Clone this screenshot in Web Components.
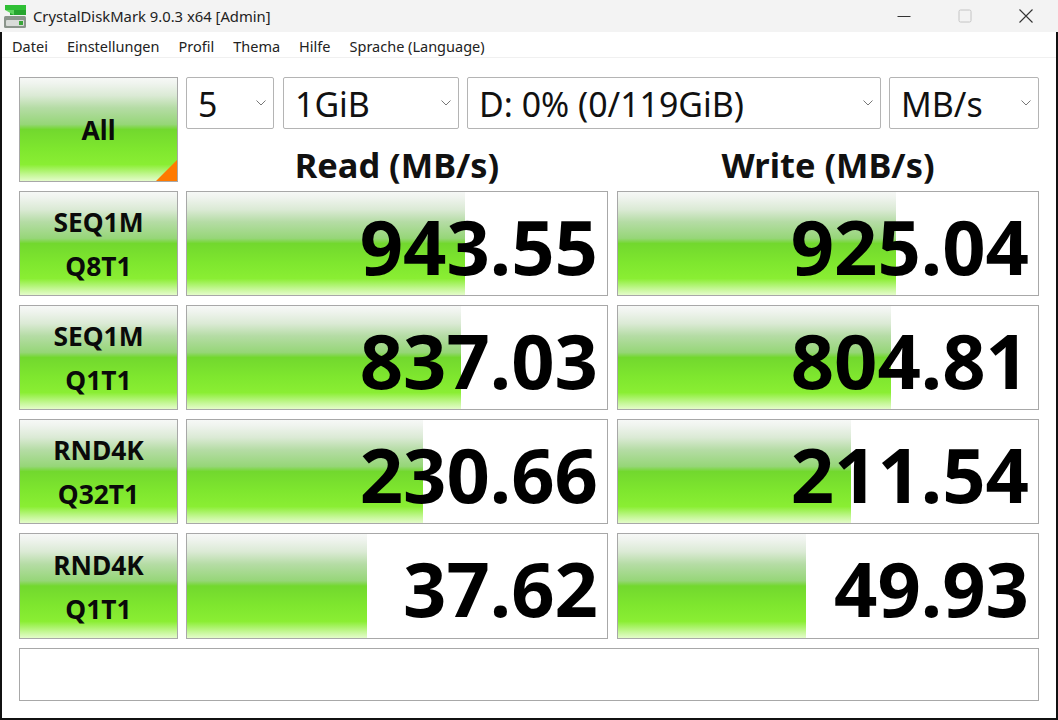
<!DOCTYPE html>
<html lang="de"><head><meta charset="utf-8"><title>CrystalDiskMark</title>
<style>
html,body{margin:0;padding:0;background:#fff}
body{width:1058px;height:720px;overflow:hidden;font-family:"Noto Sans","Open Sans",sans-serif}
</style></head><body>
<cdm-window>
  <cdm-titlebar slot="title">CrystalDiskMark 9.0.3 x64 [Admin]</cdm-titlebar>
  <cdm-menubar slot="menu" items="Datei|Einstellungen|Profil|Thema|Hilfe|Sprache (Language)"></cdm-menubar>
  <cdm-grid>
    <cdm-button class="all" corner>All</cdm-button>
    <cdm-toolbar>
      <cdm-select style="width:88px;margin-right:1px">5</cdm-select>
      <cdm-select style="width:176px">1GiB</cdm-select>
      <cdm-select style="width:414px">D: 0% (0/119GiB)</cdm-select>
      <cdm-select style="width:150px">MB/s</cdm-select>
    </cdm-toolbar>
    <cdm-heading>Read (MB/s)</cdm-heading>
    <cdm-heading class="w">Write (MB/s)</cdm-heading>

    <cdm-button>SEQ1M<br>Q8T1</cdm-button>
    <cdm-meter bar="278">943.55</cdm-meter>
    <cdm-meter class="w" bar="278">925.04</cdm-meter>

    <cdm-button>SEQ1M<br>Q1T1</cdm-button>
    <cdm-meter bar="274">837.03</cdm-meter>
    <cdm-meter class="w" bar="273">804.81</cdm-meter>

    <cdm-button>RND4K<br>Q32T1</cdm-button>
    <cdm-meter bar="236">230.66</cdm-meter>
    <cdm-meter class="w" bar="233">211.54</cdm-meter>

    <cdm-button>RND4K<br>Q1T1</cdm-button>
    <cdm-meter bar="180">37.62</cdm-meter>
    <cdm-meter class="w" bar="188">49.93</cdm-meter>

    <cdm-comment></cdm-comment>
  </cdm-grid>
</cdm-window>
<script>
const GRAD='linear-gradient(180deg,#f6f8f6 0%,#f0f4ef 5%,#dbead5 17%,#b5dca5 29%,#96d678 45%,#72d82e 50%,#7ee62e 68%,#8aee33 84%,#c4f795 94%,#e4fcca 100%)';
function def(name,html,init){
  customElements.define(name,class extends HTMLElement{
    constructor(){super();const r=this.attachShadow({mode:'open'});r.innerHTML=html;}
    connectedCallback(){init&&init(this,this.shadowRoot);}
  });
}
def('cdm-window',`<style>
:host{display:flex;flex-direction:column;width:1058px;height:720px;box-sizing:border-box;background:#fff}
.body{flex:1;display:flex;flex-direction:column;border:solid #111;border-width:0 2px 2px 2px;min-height:0}
</style><slot name="title"></slot><div class="body"><slot name="menu"></slot><slot></slot></div>`);
def('cdm-titlebar',`<style>
:host{display:flex;align-items:center;height:32px;background:#f3f3f3;color:#222;font:14.8px "Noto Sans",sans-serif;flex:none}
.ic{margin:0 7px 0 4px;flex:none;display:block}
.t{flex:1;white-space:nowrap;padding-bottom:1px}
.b{width:61px;height:32px;display:flex;align-items:center;justify-content:center}
.b.c{margin-right:2px}
.b svg{display:block}
</style>
<svg class="ic" width="22" height="28" viewBox="0 0 22 28">
<rect x="0" y="14" width="22" height="12" rx="1.5" fill="#8b958c"/><rect x="2" y="18" width="18" height="6" rx="1" fill="#d9dcd9"/><rect x="15" y="19" width="4" height="4" fill="#3aa53a"/>
<rect x="1" y="3" width="21" height="5" fill="#2fbf35"/><rect x="6" y="8" width="16" height="5" fill="#27a52f"/><path d="M1 8h9v5z" fill="#5fd45f"/>
</svg>
<span class="t"><slot></slot></span>
<span class="b"><svg width="14" height="14" viewBox="0 0 14 14"><path d="M0.5 7.5h13" stroke="#333" stroke-width="1"/></svg></span>
<span class="b"><svg width="14" height="14" viewBox="0 0 14 14"><rect x="1" y="1" width="12" height="12" rx="1.5" fill="none" stroke="#c4c4c4"/></svg></span>
<span class="b c"><svg width="14" height="14" viewBox="0 0 14 14"><path d="M0.5 0.5l13 13M13.5 0.5l-13 13" stroke="#333" stroke-width="1.1"/></svg></span>`);
def('cdm-menubar',`<style>
:host{display:flex;align-items:center;padding-left:10px;border-bottom:1px solid #f0f0f0;color:#222;font:14.5px "Noto Sans",sans-serif;flex:none;padding-top:3px;height:22px}
#m{display:flex;gap:19px}
</style><span id="m"></span>`,(h,r)=>{
  r.getElementById('m').innerHTML=h.getAttribute('items').split('|').map(s=>`<span>${s}</span>`).join('');
});
def('cdm-grid',`<style>
:host{display:grid;grid-template-columns:159px 422px 423px;grid-template-rows:52px 44px 105px 105px 105px 106px 53px;column-gap:8px;row-gap:9px;padding:19px 0 0 17px;flex:1;align-content:start}
::slotted(cdm-button.all){grid-row:1/3}
::slotted(cdm-toolbar){grid-column:2/4}
::slotted(cdm-comment){grid-column:1/4;width:1020px}
::slotted(.w){margin-left:1px}
</style><slot></slot>`);
def('cdm-toolbar',`<style>:host{display:flex;gap:8px}</style><slot></slot>`);
def('cdm-select',`<style>
:host{display:flex;align-items:center;justify-content:space-between;box-sizing:border-box;height:52px;background:#fff;border:1px solid #b4b4b4;border-radius:2px;padding:1px 7px 0 11px;font:33.9px "Noto Sans",sans-serif;color:#111;white-space:nowrap}
svg{flex:none;display:block;margin-top:-1px}
</style><span><slot></slot></span><svg width="10" height="6" viewBox="0 0 10 6"><path d="M.5.5L5 5 9.5.5" fill="none" stroke="#777"/></svg>`);
def('cdm-heading',`<style>
:host{display:flex;align-items:center;justify-content:center;font:700 34.4px "Noto Sans",sans-serif;color:#111;height:44px;padding-top:9px;box-sizing:border-box;white-space:nowrap}
</style><slot></slot>`);
def('cdm-button',`<style>
:host{display:flex;position:relative;align-items:center;justify-content:center;text-align:center;box-sizing:border-box;border:1px solid #a8a8a8;background:${GRAD};font:700 26.4px/44px "Noto Sans",sans-serif;color:#0a0a0a;overflow:hidden}
:host(:not([corner])) div{padding-top:1px}
.c{position:absolute;right:0;bottom:0;width:0;height:0;border-style:solid;border-width:0 0 21px 21px;border-color:transparent transparent #ff7a00 transparent}
</style><div><slot></slot></div>`,(h,r)=>{if(h.hasAttribute('corner')){const d=document.createElement('span');d.className='c';r.appendChild(d);}});
def('cdm-meter',`<style>
:host{display:block;position:relative;box-sizing:border-box;border:1px solid #a8a8a8;background:#fff;font:700 75.9px "Noto Sans",sans-serif;color:#000}
.bar{position:absolute;left:0;top:0;bottom:0;background:${GRAD}}
.v{position:absolute;inset:0;display:flex;align-items:center;justify-content:flex-end;padding:4px 9px 0 0;line-height:1}
</style><div class="bar"></div><div class="v"><slot></slot></div>`,(h,r)=>{r.querySelector('.bar').style.width=h.getAttribute('bar')+'px';});
def('cdm-comment',`<style>:host{display:block;box-sizing:border-box;border:1px solid #a8a8a8;background:#fff;height:53px}</style>`);
</script>
</body></html>
